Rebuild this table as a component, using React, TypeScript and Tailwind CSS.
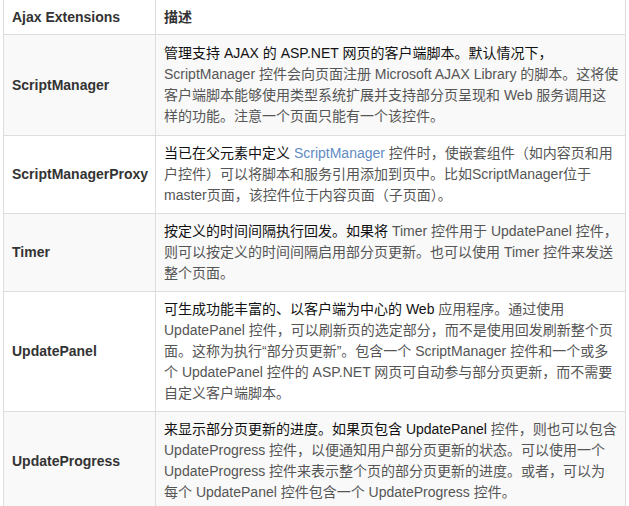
import React from "react";

type Row = {
  name: string;
  lines: React.ReactNode[];
};

const Dark = ({ children }: { children: React.ReactNode }) => (
  <span className="text-[#111]">{children}</span>
);

const rows: Row[] = [
  {
    name: "ScriptManager",
    lines: [
      <Dark>管理支持 AJAX 的 ASP.NET 网页的客户端脚本。默认情况下，</Dark>,
      "ScriptManager 控件会向页面注册 Microsoft AJAX Library 的脚本。这将使",
      "客户端脚本能够使用类型系统扩展并支持部分页呈现和 Web 服务调用这",
      "样的功能。注意一个页面只能有一个该控件。",
    ],
  },
  {
    name: "ScriptManagerProxy",
    lines: [
      <>
        <Dark>当已在父元素中定义 </Dark>
        <span className="text-[#5f8bc3]">ScriptManager</span> 控件时，使嵌套组件（如内容页和用
      </>,
      "户控件）可以将脚本和服务引用添加到页中。比如ScriptManager位于",
      "master页面，该控件位于内容页面（子页面）。",
    ],
  },
  {
    name: "Timer",
    lines: [
      <>
        <Dark>按定义的时间间隔执行回发。如果将</Dark> Timer 控件用于 UpdatePanel 控件，
      </>,
      "则可以按定义的时间间隔启用部分页更新。也可以使用 Timer 控件来发送",
      "整个页面。",
    ],
  },
  {
    name: "UpdatePanel",
    lines: [
      <>
        <Dark>可生成功能丰富的、以客户端为中心的 Web</Dark> 应用程序。通过使用
      </>,
      "UpdatePanel 控件，可以刷新页的选定部分，而不是使用回发刷新整个页",
      "面。这称为执行“部分页更新”。包含一个 ScriptManager 控件和一个或多",
      "个 UpdatePanel 控件的 ASP.NET 网页可自动参与部分页更新，而不需要",
      "自定义客户端脚本。",
    ],
  },
  {
    name: "UpdateProgress",
    lines: [
      <>
        <Dark>来显示部分页更新的进度。如果页包含 UpdatePanel</Dark> 控件，则也可以包含
      </>,
      "UpdateProgress 控件，以便通知用户部分页更新的状态。可以使用一个",
      "UpdateProgress 控件来表示整个页的部分页更新的进度。或者，可以为",
      "每个 UpdatePanel 控件包含一个 UpdateProgress 控件。",
    ],
  },
];

export default function App() {
  return (
    <div
      className="w-[629px] h-[506px] overflow-hidden bg-white pl-[3px] text-[14px] leading-[21px]"
      style={{ fontFamily: '"Liberation Sans", "Noto Sans CJK SC", sans-serif' }}
    >
      <table className="w-[623px] border-collapse table-fixed">
        <colgroup>
          <col className="w-[152px]" />
          <col />
        </colgroup>
        <thead>
          <tr className="bg-white">
            <th className="border-x border-b border-[#ddd] px-2 pt-[7px] pb-[6px] text-left font-bold text-[#333]">
              Ajax Extensions
            </th>
            <th className="border-x border-b border-[#ddd] px-2 pt-[7px] pb-[6px] text-left font-bold text-[#333]">
              描述
            </th>
          </tr>
        </thead>
        <tbody>
          {rows.map((row, i) => (
            <tr key={row.name} className={i % 2 === 0 ? "bg-[#f9f9f9]" : "bg-white"}>
              <td className="border border-[#ddd] px-2 py-[7px] align-middle font-bold text-[#333] whitespace-nowrap">
                {row.name}
              </td>
              <td
                className={
                  i === 0
                    ? "border border-[#ddd] px-2 py-[8px] align-top text-[#555] whitespace-nowrap"
                    : "border border-[#ddd] px-2 py-[7px] align-top text-[#555] whitespace-nowrap"
                }
              >
                {row.lines.map((line, j) => (
                  <div key={j}>{line}</div>
                ))}
              </td>
            </tr>
          ))}
        </tbody>
      </table>
    </div>
  );
}
